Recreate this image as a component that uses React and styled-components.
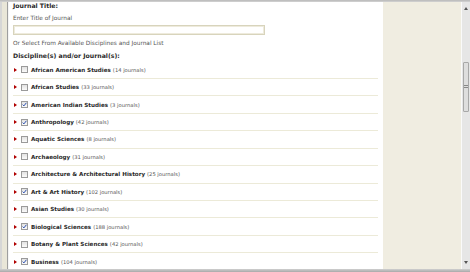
import React from "react";
import styled, { createGlobalStyle } from "styled-components";

const Global = createGlobalStyle`
  html, body { margin: 0; padding: 0; background: #fff; }
  body { font-family: "DejaVu Sans", Verdana, sans-serif; }
`;

const Frame = styled.div`
  width: 470px;
  height: 272px;
  display: flex;
  flex-direction: column;
  overflow: hidden;
  background: #fff;
`;

const TopEdge = styled.div`
  height: 2px;
  flex: none;
  background: linear-gradient(#b8b8b8, #d4d4d4);
`;

const BottomEdge = styled.div`
  height: 3px;
  flex: none;
  background: linear-gradient(#d0d0d0, #a8a8a8);
`;

const Body = styled.div`
  flex: 1;
  display: flex;
  min-height: 0;
`;

const LeftEdge = styled.div`
  width: 9px;
  flex: none;
  background: linear-gradient(90deg, #d6d6d6 0 2px, #e9e6d8 2px 7px, #9e9e9e 7px 8px, #f4f4f4 8px 9px);
`;

const Main = styled.div`
  width: 374px;
  flex: none;
  background: #fff;
  padding: 0 5px 0 4px;
  box-sizing: border-box;
  color: #333;
  overflow: hidden;
`;

const Side = styled.div`
  width: 78px;
  flex: none;
  background: #f0ede1;
`;

const Scrollbar = styled.div`
  width: 9px;
  flex: none;
  background: #e6e6e6;
  border-left: 1px solid #fafafa;
  display: flex;
  flex-direction: column;
  align-items: center;
  box-sizing: border-box;
  padding: 4px 0 4px;
`;

const Arrow = styled.div`
  width: 0;
  height: 0;
  border-left: 2px solid transparent;
  border-right: 2px solid transparent;
  ${p => p.$down ? "border-top: 3px solid #555;" : "border-bottom: 3px solid #555;"}
  margin: 1px 0;
`;

const Track = styled.div`
  flex: 1;
  width: 100%;
  display: flex;
  flex-direction: column;
  align-items: center;
  padding-top: 51px;
`;

const Thumb = styled.div`
  width: 6px;
  height: 50px;
  background: #dedede;
  border: 1px solid #a8a8a8;
  border-radius: 1px;
  box-sizing: border-box;
  display: flex;
  align-items: center;
  justify-content: center;
  &::after {
    content: "";
    width: 4px;
    height: 4px;
    background: repeating-linear-gradient(#888 0 1px, transparent 1px 2px);
  }
`;

const Heading = styled.div`
  font-size: 6.2px;
  font-weight: bold;
  line-height: 8px;
  height: 8px;
  color: #2a2a2a;
  margin-top: ${p => p.$mt || 0}px;
`;

const Note = styled.div`
  font-size: 5.8px;
  line-height: 8px;
  color: #555;
  margin-top: ${p => p.$mt || 0}px;
`;

const TitleInput = styled.div`
  width: 252px;
  height: 10px;
  border: 1px solid #d8d4bc;
  box-shadow: inset 0 0 0 1px #eeebdd;
  box-sizing: border-box;
  margin: 3px 0 4px;
  background: #fff;
`;

const List = styled.div`
  margin-top: 1.5px;
`;

const Row = styled.div`
  height: 17.45px;
  box-sizing: border-box;
  display: flex;
  align-items: center;
  gap: 3px;
  padding-left: 1px;
  border-bottom: 1px solid #ecead8;
  font-size: 5.2px;
  color: #555;
`;

const Tri = styled.span`
  width: 0;
  height: 0;
  border-top: 2.5px solid transparent;
  border-bottom: 2.5px solid transparent;
  border-left: 3px solid #b00000;
  margin-right: 2px;
`;

const Box = styled.span`
  width: 7px;
  height: 7px;
  border: 1px solid #9a9a9a;
  background: linear-gradient(#e2e2e2, #fafafa);
  box-sizing: border-box;
  display: inline-flex;
  align-items: center;
  justify-content: center;
  margin-left: -1px;
  svg { display: block; }
`;

const Name = styled.b`
  font-weight: bold;
  color: #2a2a2a;
  font-size: 5.6px;
  margin-right: 2px;
`;

const items = [
  ["African American Studies", 14, false],
  ["African Studies", 33, false],
  ["American Indian Studies", 3, true],
  ["Anthropology", 42, true],
  ["Aquatic Sciences", 8, false],
  ["Archaeology", 31, false],
  ["Architecture & Architectural History", 25, false],
  ["Art & Art History", 102, true],
  ["Asian Studies", 30, false],
  ["Biological Sciences", 188, true],
  ["Botany & Plant Sciences", 42, false],
  ["Business", 104, true],
];

const Check = ({ on }) => (
  <Box>
    {on && (
      <svg width="5" height="5" viewBox="0 0 5 5">
        <path d="M0.6 2.6 L1.9 3.9 L4.4 0.8" fill="none" stroke="#2a4fb0" strokeWidth="1" />
      </svg>
    )}
  </Box>
);

export default function App() {
  return (
    <Frame>
      <Global />
      <TopEdge />
      <Body>
        <LeftEdge />
        <Main>
          <Heading>Journal Title:</Heading>
          <Note $mt={4}>Enter Title of Journal</Note>
          <TitleInput />
          <Note>Or Select From Available Disciplines and Journal List</Note>
          <Heading $mt={5}>Discipline(s) and/or Journal(s):</Heading>
          <List>
            {items.map(([n, c, on]) => (
              <Row key={n}>
                <Tri />
                <Check on={on} />
                <span>
                  <Name>{n}</Name>({c} journals)
                </span>
              </Row>
            ))}
          </List>
        </Main>
        <Side />
        <Scrollbar>
          <Arrow />
          <Track>
            <Thumb />
          </Track>
          <Arrow $down />
        </Scrollbar>
      </Body>
      <BottomEdge />
    </Frame>
  );
}
